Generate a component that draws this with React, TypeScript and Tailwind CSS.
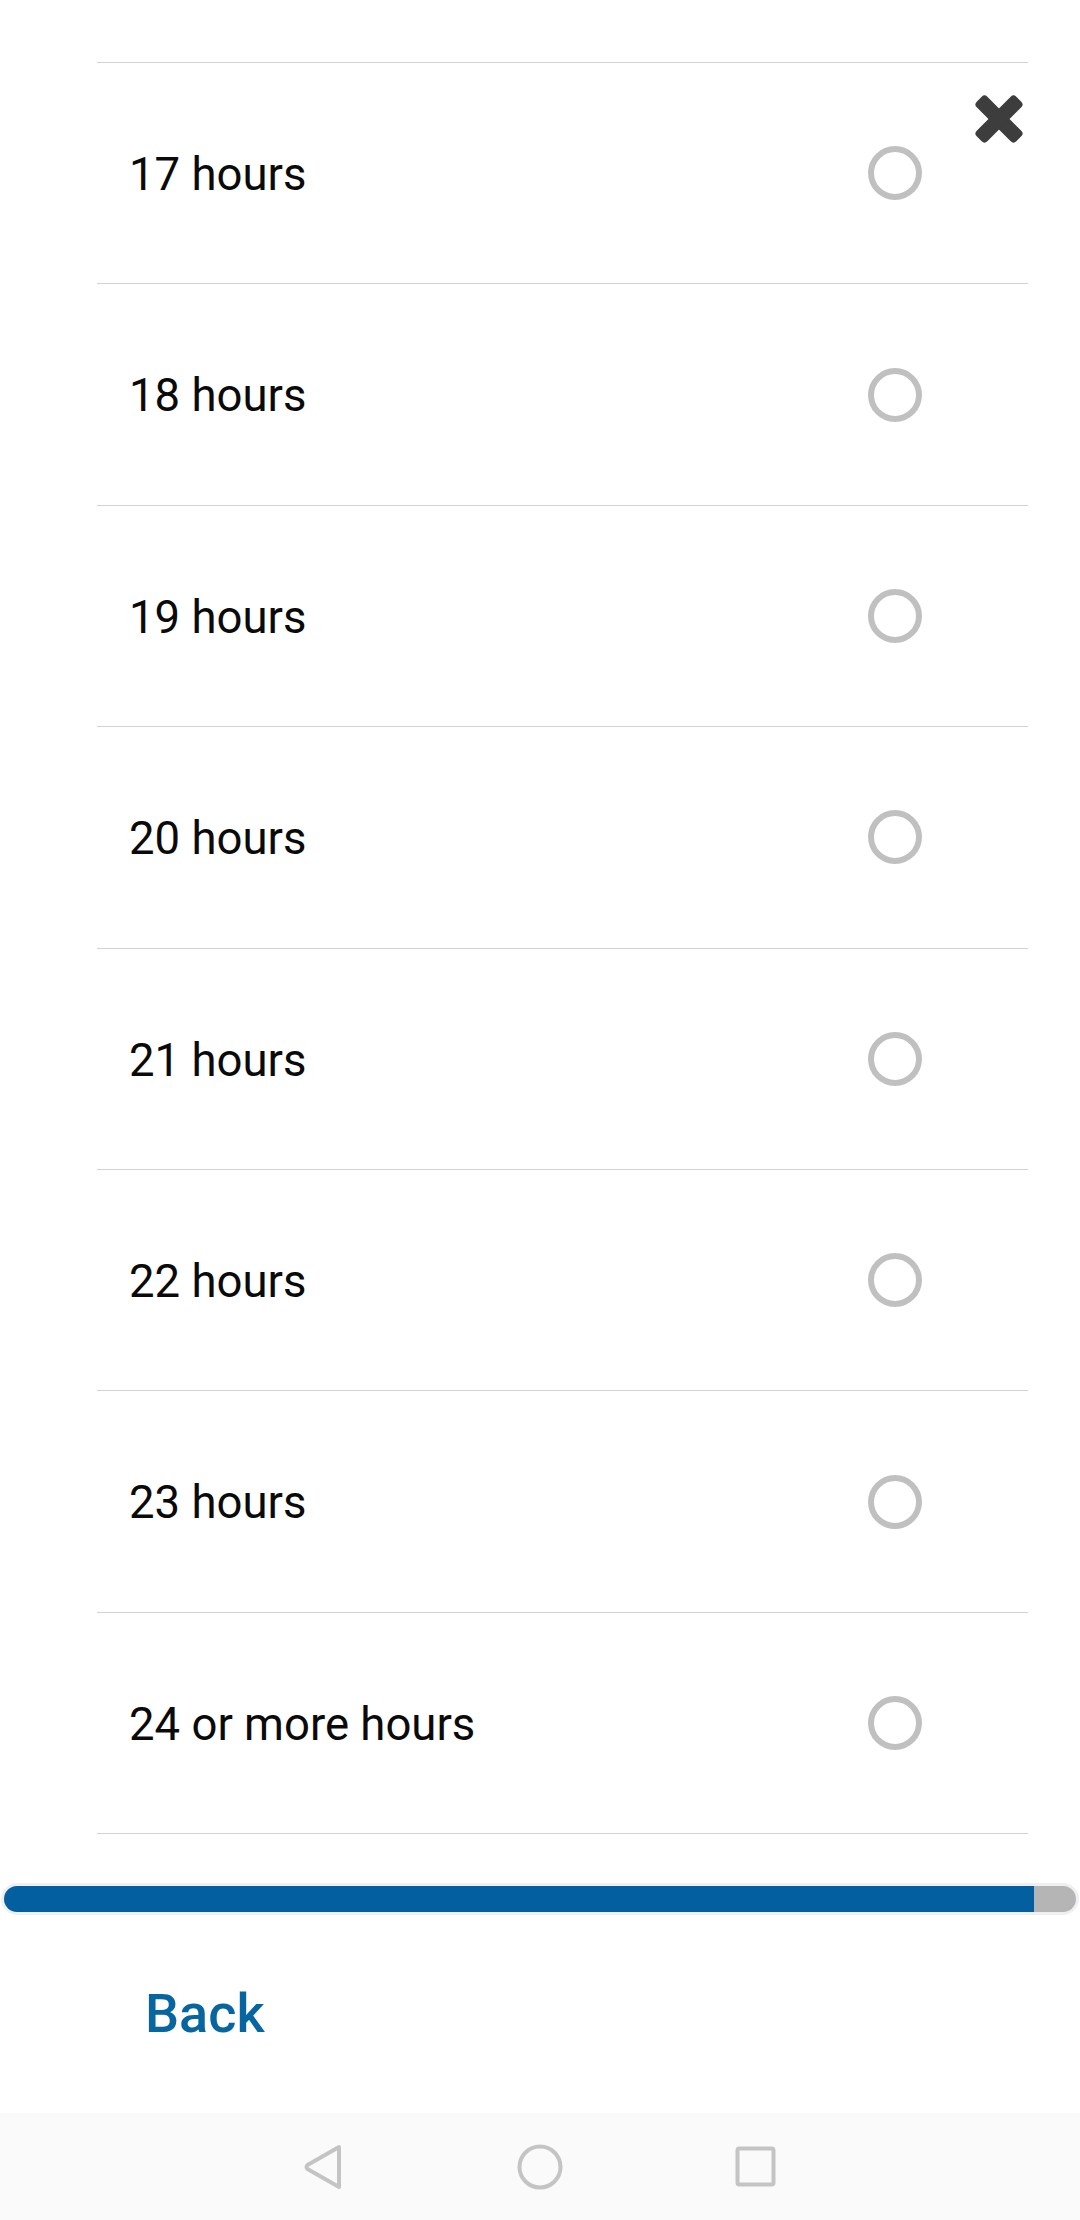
import React from 'react';

const options = [
  '17 hours',
  '18 hours',
  '19 hours',
  '20 hours',
  '21 hours',
  '22 hours',
  '23 hours',
  '24 or more hours',
];

function CloseIcon() {
  return (
    <svg width="50" height="50" viewBox="0 0 50 50">
      <rect x="-3" y="17.5" width="56" height="15" rx="4" fill="#3d3d3d" transform="rotate(45 25 25)" />
      <rect x="-3" y="17.5" width="56" height="15" rx="4" fill="#3d3d3d" transform="rotate(-45 25 25)" />
    </svg>
  );
}

function NavBar() {
  return (
    <div className="h-[107px] bg-[#fafafa] flex items-center justify-center">
      <div className="flex items-center gap-[156px]">
        <div className="w-[60px] flex justify-center">
          <svg width="40" height="46" viewBox="0 0 40 46">
            <path d="M35 3 L3.5 21 Q1.5 23 3.5 25 L35 43 Z" fill="none" stroke="#c4c4c4" strokeWidth="4" strokeLinejoin="round" />
          </svg>
        </div>
        <div className="w-[60px] flex justify-center">
          <svg width="46" height="46" viewBox="0 0 46 46">
            <circle cx="23" cy="23" r="20.5" fill="none" stroke="#c4c4c4" strokeWidth="4" />
          </svg>
        </div>
        <div className="w-[60px] flex justify-center">
          <svg width="42" height="42" viewBox="0 0 42 42">
            <rect x="2.5" y="2.5" width="36" height="36" rx="2" fill="none" stroke="#c4c4c4" strokeWidth="4" />
          </svg>
        </div>
      </div>
    </div>
  );
}

export default function App() {
  return (
    <div
      className="w-[1080px] h-[2220px] bg-white flex flex-col relative overflow-hidden"
      style={{ fontFamily: 'Roboto, "Noto Sans", sans-serif' }}
    >
      {/* Options list */}
      <div className="ml-[97px] mr-[52px] pt-[62px]">
        <div className="border-t border-[#d2d2d2]">
          {options.map((label, index) => (
            <div
              key={index}
              className="h-[221.4px] border-b border-[#d2d2d2] flex items-center justify-between pl-[32px] pr-[106px]"
            >
              <span className="text-[45.5px] text-[#0a0a0a] leading-none pt-[3px]">{label}</span>
              <span className="w-[54px] h-[54px] rounded-full border-[6px] border-[#c0c0c0]" />
            </div>
          ))}
        </div>
      </div>

      {/* Close button */}
      <button className="absolute left-[974px] top-[94px] w-[50px] h-[50px]" aria-label="Close">
        <CloseIcon />
      </button>

      {/* Progress */}
      <div className="mt-[49px] mx-[1px] h-[32px] rounded-full bg-[#eef0f2] p-[3px] flex">
        <div className="h-full w-[1030px] bg-[#035f9f] rounded-l-full" />
        <div className="h-full flex-1 bg-[#b5b5b5] rounded-r-full" />
      </div>

      {/* Back */}
      <div className="flex-1 flex items-center">
        <button className="ml-[145px] text-[54px] font-medium text-[#07669f] leading-none">
          Back
        </button>
      </div>

      <NavBar />
    </div>
  );
}
